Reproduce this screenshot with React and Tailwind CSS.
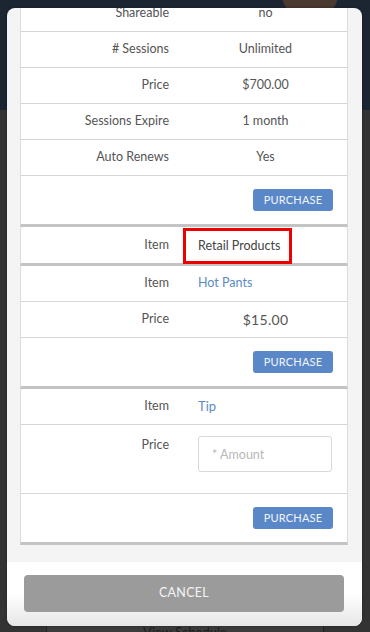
import React from 'react';

const font = { fontFamily: 'Lato, "Noto Sans", sans-serif' };

function Row({ label, children, last, align = 'center' }) {
  return (
    <div className={`grid grid-cols-2 h-[36px] ${last ? '' : 'border-b border-[#d6d6d6]'}`}>
      <div className="flex items-center justify-end pr-[15px] text-[#555]">{label}</div>
      <div className={`flex items-center text-[#555] ${align === 'center' ? 'justify-center' : 'justify-start pl-[14px]'}`}>
        {children}
      </div>
    </div>
  );
}

function PurchaseRow() {
  return (
    <div className="flex items-center justify-end h-[48px] pr-[14px]">
      <button className="w-[80px] h-[22px] rounded-[3px] bg-[#5a87c7] text-[#f2f5fb] text-[11px] tracking-[0.2px]">
        PURCHASE
      </button>
    </div>
  );
}

function Card({ children, className = '' }) {
  return (
    <div className={`bg-white border-x border-[#dcdcdc] border-b-[3px] border-b-[#c4c4c4] rounded-t-[2px] ${className}`}>
      {children}
    </div>
  );
}

export default function App() {
  return (
    <div className="relative w-[370px] h-[632px] overflow-hidden bg-[#333333] text-[12.5px]" style={font}>
      {/* page behind the modal */}
      <div className="h-[110px] bg-[#1c2532]" />
      <div className="absolute top-[-30px] left-[282px] w-[56px] h-[48px] rounded-full bg-[#4a3a30]" />
      <div className="absolute left-[46px] top-[626px] w-[278px] h-[20px] bg-[#3b3b3b] border-x border-[#222] flex justify-center">
        <span className="text-[#1e1e1e] text-[13px] leading-[20px] mt-[-4px]">View Schedule</span>
      </div>

      {/* modal */}
      <div className="absolute left-[7px] top-[8px] w-[355px] h-[618px] rounded-[8px] bg-[#f4f4f4] overflow-hidden flex flex-col shadow-[0_0_3px_rgba(0,0,0,0.3)]">
        <div className="flex-1 overflow-hidden px-[13px] pr-[14px]">
          <div className="mt-[-12px]">
            <Card>
              <Row label="Shareable">no</Row>
              <Row label="# Sessions">Unlimited</Row>
              <Row label="Price">$700.00</Row>
              <Row label="Sessions Expire">1 month</Row>
              <Row label="Auto Renews">Yes</Row>
              <PurchaseRow />
            </Card>

            <Card>
              <div className="grid grid-cols-2 h-[36px]">
                <div className="flex items-center justify-end pr-[15px] text-[#555]">Item</div>
                <div className="relative">
                  <div className="absolute left-[-1px] top-[1px] w-[109px] h-[36px] border-[3px] border-[#ee0000] bg-white flex items-center pl-[12px] text-[#444] z-10">
                    Retail Products
                  </div>
                </div>
              </div>
            </Card>

            <Card>
              <Row label="Item" align="left"><span className="text-[#5b8ac8]">Hot Pants</span></Row>
              <Row label="Price"><span className="text-[14px] tracking-[0.3px]">$15.00</span></Row>
              <PurchaseRow />
            </Card>

            <Card>
              <Row label="Item" align="left"><span className="text-[#5b8ac8] text-[13px]">Tip</span></Row>
              <div className="grid grid-cols-2 h-[69px] border-b border-[#d6d6d6]">
                <div className="flex justify-end pr-[15px] pt-[11px] text-[#555]">Price</div>
                <div className="pl-[14px] pt-[11px] pr-[14px]">
                  <input
                    placeholder="* Amount"
                    className="w-[134px] h-[36px] border border-[#d8d8d8] rounded-[3px] px-[13px] text-[12.5px] bg-white placeholder:text-[#b8b8b8] outline-none"
                    style={font}
                  />
                </div>
              </div>
              <PurchaseRow />
            </Card>
          </div>
        </div>

        <div className="h-[64px] shrink-0 bg-gradient-to-b from-white via-white to-[#e6e6e6] px-[17px] pt-[13px]">
          <button className="w-[320px] h-[37px] rounded-[4px] bg-[#9b9b9b] text-[#f4f4f4] text-[12.5px] tracking-[0.3px]">
            CANCEL
          </button>
        </div>
      </div>
    </div>
  );
}
